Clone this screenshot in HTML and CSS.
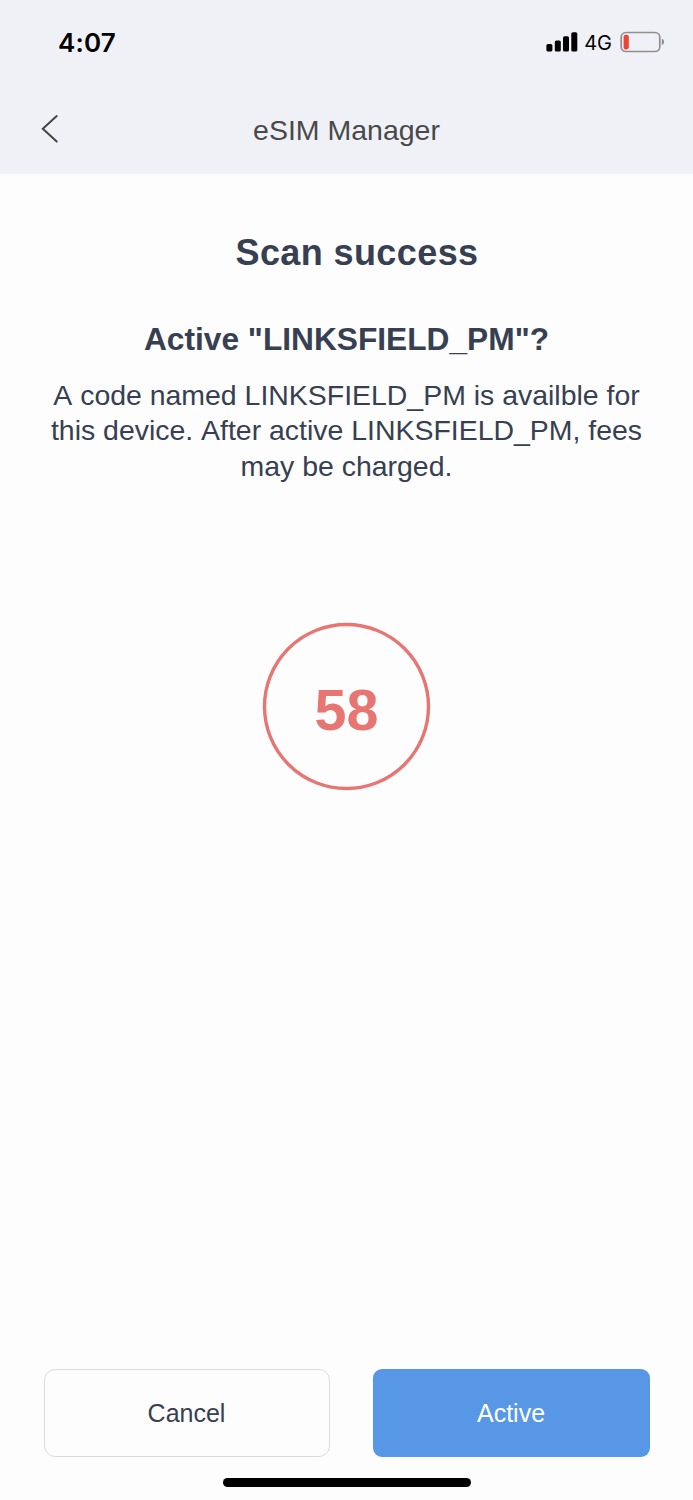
FILE: index.html
```html
<!DOCTYPE html>
<html lang="en">
<head>
    <meta charset="UTF-8">
    <meta name="viewport" content="width=device-width, initial-scale=1.0">
    <title>eSIM Manager</title>
    <link rel="stylesheet" href="styles.css">
</head>
<body>

<header class="header">
    <div class="status-bar">
        <span class="time">4:07</span>
        <div class="status-icons">
            <svg class="signal" width="32" height="20" viewBox="0 0 32 20">
                <rect x="0.4" y="12" width="6" height="7.6" rx="1.6"/>
                <rect x="8.8" y="8.4" width="6" height="11.2" rx="1.6"/>
                <rect x="17" y="4.3" width="6" height="15.3" rx="1.6"/>
                <rect x="25.3" y="0.2" width="6" height="19.4" rx="1.6"/>
            </svg>
            <span class="network">4G</span>
            <svg class="battery" width="46" height="22" viewBox="0 0 46 22">
                <rect x="1.2" y="1.5" width="38.6" height="19" rx="4.8" fill="none" stroke="#8f8f92" stroke-width="1.7"/>
                <rect x="3.6" y="3.8" width="5.2" height="14.6" rx="2.1" fill="#ee4433"/>
                <path d="M41.8 7.8 C44.8 9 44.8 13 41.8 14.2 Z" fill="#8f8f92"/>
            </svg>
        </div>
    </div>
    <div class="nav-bar">
        <svg class="back" width="20" height="30" viewBox="0 0 20 30">
            <path d="M16.7 2 L2.8 14.8 L16.7 27.6" fill="none" stroke="#444" stroke-width="2" stroke-linecap="round"/>
        </svg>
        <span class="nav-title">eSIM Manager</span>
    </div>
</header>

<main class="content">
    <h1>Scan success</h1>
    <h2>Active "LINKSFIELD_PM"?</h2>
    <p>A code named LINKSFIELD_PM is availble for this device. After active LINKSFIELD_PM, fees may be charged.</p>
    <svg class="countdown" width="169" height="169" viewBox="0 0 169 169">
        <circle cx="84.5" cy="84.5" r="82" fill="none" stroke="#e77672" stroke-width="3.4"/>
        <text x="84.5" y="108" text-anchor="middle">58</text>
    </svg>
</main>

<footer class="footer">
    <div class="buttons">
        <button class="cancel">Cancel</button>
        <button class="active">Active</button>
    </div>
    <div class="home-indicator"></div>
</footer>

</body>
</html>
```
FILE: styles.css
```css
* {
    box-sizing: border-box;
}

body {
    font-family: "Liberation Sans", Arial, sans-serif;
    font-kerning: none;
    margin: 0;
    height: 1500px;
    display: flex;
    flex-direction: column;
    background: #fdfdfd;
    color: #374052;
}

.header {
    height: 174px;
    background: #f0f1f6;
}

.status-bar {
    height: 84px;
    padding: 0 27px 0 58px;
    display: flex;
    justify-content: space-between;
    align-items: center;
    color: #000;
}

.time {
    font: 600 26px "Inter", sans-serif;
    letter-spacing: 0.2px;
}

.status-icons {
    display: flex;
    align-items: center;
}

.network {
    font: 400 20px "Inter", sans-serif;
    margin: 2px 8px 0 6px;
}

.nav-bar {
    height: 90px;
    padding: 0 40px;
    display: grid;
    grid-template-columns: 20px 1fr 20px;
    align-items: center;
}

.nav-title {
    font-size: 28.5px;
    text-align: center;
    color: #494949;
    padding-top: 3px;
}

.content {
    flex: 1;
    display: flex;
    flex-direction: column;
    align-items: center;
    padding: 57px 40px 0;
}

h1 {
    margin: 0 0 0 21px;
    font-size: 36px;
    line-height: 44px;
    letter-spacing: 0.4px;
}

h2 {
    margin: 45px 0 0;
    font-size: 31.7px;
    line-height: 38px;
}

p {
    margin: 20px 0 0;
    font-size: 28.45px;
    line-height: 35.3px;
    text-align: center;
}

.countdown {
    margin-top: 138px;
}

.countdown text {
    fill: #e77672;
    font-size: 57.5px;
    font-weight: bold;
}

.footer {
    padding: 0 43px 13px 44px;
}

.buttons {
    display: flex;
    gap: 43px;
}

button {
    height: 88px;
    padding: 0 1px 0 0;
    border: none;
    border-radius: 9px;
    font-family: inherit;
    font-size: 25px;
}

.cancel {
    width: 286px;
    border: 1px solid #dcdcdc;
    border-radius: 11px;
    background: #fdfdfd;
    color: #374052;
}

.active {
    width: 277px;
    background: #5797e6;
    color: #fff;
}

.home-indicator {
    width: 248px;
    height: 9px;
    margin: 21px auto 0;
    border-radius: 5px;
    background: #000;
}
```
